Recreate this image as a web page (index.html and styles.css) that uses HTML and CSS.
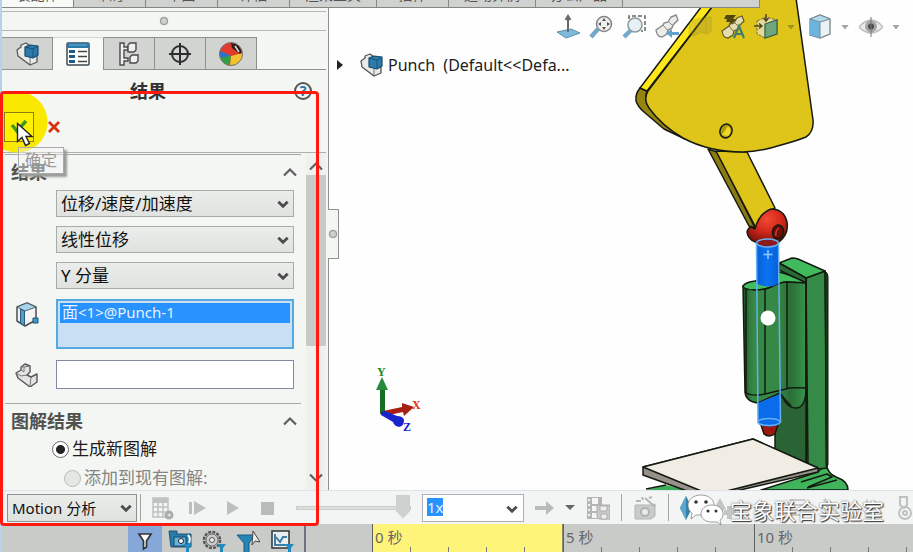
FILE: index.html
```html
<!DOCTYPE html>
<html lang="zh-CN">
<head>
<meta charset="utf-8">
<title>Punch</title>
<link rel="stylesheet" href="styles.css">
</head>
<body>
<svg class="defs" aria-hidden="true">
  <defs>
    <linearGradient id="bodyG" x1="0" x2="1"><stop offset="0" stop-color="#1d5429"/><stop offset=".15" stop-color="#358845"/><stop offset=".55" stop-color="#358845"/><stop offset=".75" stop-color="#2a6e38"/><stop offset="1" stop-color="#39944b"/></linearGradient>
    <radialGradient id="ballG" cx=".5" cy=".3" r=".7"><stop offset="0" stop-color="#f04a35"/><stop offset=".5" stop-color="#d6291b"/><stop offset="1" stop-color="#7c120c"/></radialGradient>
    <linearGradient id="pinG" x1="0" x2="1"><stop offset="0" stop-color="#0a5fd8"/><stop offset=".5" stop-color="#0a74f2"/><stop offset="1" stop-color="#0860dc"/></linearGradient>
    <symbol id="part" viewBox="0 0 24 24">
      <path d="M2 8 6 5V3l5-2 4 3v8l7 2v6l-7 3L3 14z" fill="#e9ebea" stroke="#555" stroke-width="1.3" stroke-linejoin="round"/>
      <path d="M15 22v-7" stroke="#777" stroke-width="1"/>
      <path d="m10 5 5-2 8 1v9l-5 3-8-2z" fill="#2c7bab" stroke="#164a6e" stroke-width="1.2" stroke-linejoin="round"/>
      <path d="m10 5 8 2 5-3M18 7v9" fill="none" stroke="#1b547b"/>
    </symbol>
    <symbol id="chev" viewBox="0 0 12 12"><path d="m2 4 4 4 4-4" fill="none" stroke="#4c4c4c" stroke-width="2.4"/></symbol>
    <symbol id="chevup" viewBox="0 0 14 10"><path d="m1 8.500 6-6 6 6" fill="none" stroke="#5f5f5f" stroke-width="2.200"/></symbol>
  </defs>
</svg>
<div class="app">
  <nav class="ribbon">
    <a href="#" class="rtab on">装配体</a><a href="#" class="rtab">布局</a><a href="#" class="rtab">草图</a><a href="#" class="rtab">评估</a><a href="#" class="rtab wide">渲染工具</a><a href="#" class="rtab">插件</a><a href="#" class="rtab wide">运动算例</a><a href="#" class="rtab wide">办公产品</a><a href="#" class="rtab widest">Flow Simulation</a>
  </nav>

  <main class="main">
    <aside class="panel">
      <div class="grip"><i class="dot"></i></div>
      <div class="ptabs">
        <button class="ptab" aria-label="特征树"><svg width="24" height="24"><use href="#part"/></svg></button>
        <button class="ptab on" aria-label="属性"><svg width="26" height="26" viewBox="0 0 26 26"><rect x="2" y="2" width="22" height="22" rx="1" fill="#fff" stroke="#3e4a52" stroke-width="1.500"/><path d="M2 2h22v5H2z" fill="#2b78ab"/><path d="M4 4h18" stroke="#73b0d6"/><path d="M4 9h6v3H4zM4 14h6v3H4zM4 19h6v3H4z" fill="#1f5c8a"/><path d="M13 10.500h9M13 15.500h9M13 20.500h9" stroke="#444" stroke-width="1.500"/></svg></button>
        <button class="ptab" aria-label="配置"><svg width="24" height="26" viewBox="0 0 24 26" fill="#f0f0f0" stroke="#4a4a4a" stroke-width="1.400"><path d="M3 2h4v4h4v3H7v8h4v3H7v4H3z"/><path d="m11 4 2-2h6v7l-2 2h-6zM13 16l2-2h6v6l-2 2h-6z"/></svg></button>
        <button class="ptab" aria-label="尺寸"><svg width="26" height="26" viewBox="0 0 26 26" fill="none" stroke="#2d2d2d" stroke-width="2"><circle cx="13" cy="13" r="8"/><path d="M13 2v22M2 13h22"/></svg></button>
        <button class="ptab" aria-label="外观"><svg width="26" height="26" viewBox="0 0 26 26"><circle cx="13" cy="13" r="11.500" fill="#e33a2b"/><path d="M13 15 2 10a11.500 11.500 0 0 0 10 14.500z" fill="#2fa044"/><path d="M13 15 12 24.500A11.500 11.500 0 0 0 24 16l0-4z" fill="#f2c230"/><path d="M12 14 2 10q-1 3 0 6 5 1 10-2z" fill="#2f6fd0"/><path d="m13 2q8 0 11 9l-2 2-8-6z" fill="#2a1d1d"/><path d="m17 5 4 6" stroke="#e8dede" stroke-width="1.500"/><circle cx="13" cy="13" r="11.500" fill="none" stroke="#777"/></svg></button>
      </div>
      <header class="ptitle">
        <h1>结果</h1>
        <button class="help" aria-label="帮助">?</button>
      </header>
      <div class="confirm">
        <span class="halo"></span>
        <button class="ok" aria-label="确定"><svg width="20" height="18" viewBox="0 0 20 18"><path d="m3 7 5 6 9-10" fill="none" stroke="#3f9a1e" stroke-width="3.500"/></svg></button>
        <button class="cancel" aria-label="取消"><svg width="12" height="12" viewBox="0 0 12 12"><path d="m1 1 10 10M11 1 1 11" stroke="#d9300f" stroke-width="2.800"/></svg></button>
        <span class="tip">确定</span>
        <svg class="cursor" width="18" height="26" viewBox="0 0 18 26"><path d="M1.500 1.500v18l4.500-4 3.500 8 4-2-3.500-7h6z" fill="#fff" stroke="#222" stroke-width="1.400"/></svg>
      </div>
      <div class="scroll">
        <div class="groups">
          <section class="group">
            <header class="ghead"><h2>结果</h2><button aria-label="折叠"><svg width="14" height="10"><use href="#chevup"/></svg></button></header>
            <div class="fields">
              <label class="sel"><select aria-label="类别"><option>位移/速度/加速度</option></select><svg class="arr" width="14" height="14"><use href="#chev"/></svg></label>
              <label class="sel"><select aria-label="子类别"><option>线性位移</option></select><svg class="arr" width="14" height="14"><use href="#chev"/></svg></label>
              <label class="sel"><select aria-label="分量"><option>Y 分量</option></select><svg class="arr" width="14" height="14"><use href="#chev"/></svg></label>
            </div>
            <div class="picks">
              <div class="pick">
                <svg width="24" height="26" viewBox="0 0 24 26"><path d="m2 5 10-4 9 4v13l-11 6-8-5z" fill="#f3f5f5" stroke="#4d4d4d" stroke-width="1.500" stroke-linejoin="round"/><path d="m2 5 8 4 11-4-9-4z" fill="#a9d3ea" stroke="#4b6675"/><path d="M5.500 7v14l4 2.500V9z" fill="#4f9fcb" stroke="#2b5b78"/><path d="M18 16h5v5h-5z" fill="#3b9bd0" stroke="#1c4f70"/></svg>
                <div class="list" role="listbox" aria-label="所选面"><div class="item" role="option" aria-selected="true"><span class="cj">面</span>&lt;1&gt;@Punch-1</div></div>
              </div>
              <div class="pick">
                <svg width="24" height="24" viewBox="0 0 24 24"><path d="m1 10 5-3V4l4-3 5 2v6l-3 3 4 2 6-3v8l-7 5L3 15z" fill="#e3e4e3" stroke="#555" stroke-width="1.400" stroke-linejoin="round"/><path d="m1 10 5 3 6-1M6 7l3 2V4L6 4m3 0 6-1M16 14l-1 9" fill="none" stroke="#777"/></svg>
                <input class="blank" type="text" aria-label="参考零部件">
              </div>
            </div>
          </section>
          <section class="group">
            <header class="ghead"><h2>图解结果</h2><button aria-label="折叠"><svg width="14" height="10"><use href="#chevup"/></svg></button></header>
            <div class="radios">
              <label class="radio"><input type="radio" name="plot" checked>生成新图解</label>
              <label class="radio sub"><input type="radio" name="plot" disabled>添加到现有图解:</label>
            </div>
          </section>
        </div>
        <div class="sbar"><svg width="14" height="10"><use href="#chevup"/></svg><i class="thumb"></i><svg class="down" width="14" height="10"><use href="#chevup"/></svg></div>
      </div>
    </aside>

    <section class="view">
      <svg class="scene" viewBox="329 8 584 482" preserveAspectRatio="xMaxYMin meet" stroke="#151a10" stroke-width="1.500" stroke-linejoin="round" aria-hidden="true">
        <path d="m645 490 20-5 20 5z" fill="#3cae58" stroke="none"/><path d="m645 489 20-4" fill="none"/>
        <path d="m760 490 57-18 8-8q2 10 10 13 12 4 12 13z" fill="#3fb45a"/>
        <path d="m800 482 26-8 5 3-24 10M806 488l30-8" fill="none"/>
        <path d="M774 290h32v175l-32-15z" fill="#2a6434"/>
        <path d="M805 278l19-7 2 197-8 1-11-5z" fill="#368a47"/>
        <path d="M824 271q3 2 3 6v188l-2 2z" fill="#153b1c" stroke-width="1"/>
        <path d="m778 263 13-5q3 0 6 1l27 12-19 7z" fill="#3fbb5d"/>
        <path d="m778 263 27 15v5l-27-13z" fill="#296a36"/>
        <path d="M742 286q3-4 12-5l24-9q10 2 27 11l-19-1q-6 0-16 5-6 3-16 3-12 0-12-4z" fill="#41bd5e"/>
        <path d="M742 286q0 4 12 4 10 0 16-3 10-5 16-5l19 1V391q-1 17-10 17-9 0-14-12l-2-3L757 403Q745 402 744 392z" fill="url(#bodyG)"/>
        <path d="M744 392q6 5 20 2l21-5q4-2 20-1M745 289v104M764 289v105M786 283v106M805 278v188M781 396l9 10" fill="none"/>
        <path d="m748 289 4 1v98l-4 5z" fill="#357f42" stroke="none" opacity=".6"/>
        <path d="M760 425h17l-3 9q-6 4-11 0z" fill="#9b170f"/>
        <path d="m757 403 22-9v30q-11 5-22 0z" fill="#0a6cea" stroke="none"/>
        <path d="M752 439 642 467v8l55 20 29-2 91-21v-4z" fill="#96918a"/>
        <path d="m752 439-110 28 68 28 107-27z" fill="#f1ece4"/>

        <path d="m707 149 9 3 38 76-6-2z" fill="#8b7b12"/>
        <path d="m715 151 31 1 28 56q-14 8-19 20z" fill="#dfc519"/>
        <path d="M746 232q1-4 4-5l4 2q4-16 16-20 13 0 16 13 2 12-8 20l-10 1q-20 2-22-11z" fill="url(#ballG)"/>
        <ellipse cx="777" cy="232" rx="5.500" ry="7" fill="#6b0d08" transform="rotate(15 777 232)"/><path d="M775 236q-1-5 3-8" stroke="#d53a2a" fill="none"/>
        <path d="M756 243h21v41q-9 5-21 0z" fill="url(#pinG)" stroke="none"/>
        <ellipse cx="766.500" cy="243" rx="10" ry="4" fill="#8a1a20" stroke="none"/>
        <g fill="none" stroke="#65b0f2"><ellipse cx="766.500" cy="243" rx="11" ry="4"/><path d="M755.500 243 757 423M777.500 243l2 180"/><ellipse cx="768" cy="422" rx="11" ry="3.500"/><path d="M767 250v9M762.500 254.500h9" stroke="#8fcaff"/></g>
        <circle cx="767" cy="318" r="7.500" fill="#fff" stroke="none"/>

        <path d="M639 88q-5 6-4 13 2 6 8 11l20 17 21 10-36-33q-5-7-2-15z" fill="#958410"/>
        <path d="M707-2 639 88l7 3L718-2z" fill="#ffe71c"/>
        <path d="M718-2 647 91q-5 9 1 17 13 18 34 30 26 14 60 14 16 0 38-7 15-4 25-8 8-5 7-17L795-2z" fill="#dfc519"/>
        <ellipse cx="725" cy="131" rx="6" ry="7" fill="#b29c10" transform="rotate(20 725 131)"/><path d="m721 135 6-9q5 5 0 10z" fill="#f0d924" stroke="none"/>

        <g stroke="none">
          <path d="M379 386h5v28h-5z" fill="#166e25"/><path d="m381 377 6 13h-12z" fill="#26883a"/>
          <path d="m382 411 19-4v-4l12 4-10 9-1-4-19 4z" fill="#a81f13"/><path d="m380 412 4-1 12 5q6 0 7 4 0 6-5 7-5-1-6-5l-12-7z" fill="#1a24cc"/>
        </g>
        <g class="axes" stroke="none"><text x="376" y="376" fill="#168a2a">Y</text><text x="411" y="409" fill="#e03020">X</text><text x="402" y="431" fill="#1a24cc">Z</text></g>
      </svg>
      <div class="handle"><i class="dot"></i></div>
      <div class="tree">
        <svg width="6" height="10" viewBox="0 0 6 10"><path d="m0 0 6 5-6 5z" fill="#222"/></svg>
        <svg width="24" height="24"><use href="#part"/></svg>
        <span>Punch  (Default&lt;&lt;Defa...</span>
      </div>
      <div class="hud">
        <button aria-label="正视于"><svg viewBox="0 0 24 26"><path d="m1 18 14-3 9 4-14 5z" fill="#7fbadb" stroke="#5b91b0"/><path d="M12 18V3M9.500 6 12 2l2.500 4" stroke="#6a6a6a" stroke-width="2" fill="none"/></svg></button>
        <button aria-label="整屏显示全图"><svg viewBox="0 0 24 26"><path d="m2 23 7-8" stroke="#74a9c8" stroke-width="4.500"/><circle cx="15" cy="10" r="7.500" fill="#eef0f0" stroke="#888" stroke-width="1.600"/><path d="m15 4 2 3h-4zM15 16l2-3h-4zM9 10l3-2v4zM21 10l-3-2v4z" fill="#555"/></svg></button>
        <button aria-label="局部放大"><svg viewBox="0 0 24 26"><path d="M7 5V2h16v15h-4" fill="none" stroke="#666" stroke-width="1.500" stroke-dasharray="4 2"/><path d="m2 23 7-7" stroke="#74a9c8" stroke-width="4.500"/><circle cx="13" cy="11" r="7" fill="#e7f0f5" stroke="#8f9ba0" stroke-width="1.600"/></svg></button>
        <button aria-label="上一视图"><svg viewBox="0 0 24 26"><path d="m1 16 7-5 1-2 4-1 3-5 5-2 2 5-5 5-1 3-4 2-1 4-5 3q-5 0-6-7z" fill="#ececea" stroke="#898989" stroke-width="1.400"/><path d="m13 7 5 5M8 11l5 6" stroke="#8d8d8d"/><path d="m11 19 6-4v3h7v3h-7v3z" fill="#5fa3cc"/></svg></button>
        <button aria-label="剖面视图"><svg viewBox="0 0 24 26" opacity=".3"><path d="m2 7 12-3 9-1v14l-4 3-6-2-8 4-4-2z" fill="#a59530" stroke="#796d18"/><path d="m14 4 4 3v12M2 7l5 2v12" stroke="#796d18" fill="none"/></svg></button>
        <button aria-label="视图设定"><svg viewBox="0 0 24 26"><path d="M5 1h10l-3 4h4l-9 8 2-5H5l1-3H3z" fill="#51470f"/><path d="m1 17 7-5 1-2 4-1 3-5 5-2 2 5-5 5-1 3-4 2-1 4-5 3q-5 0-6-7z" fill="#e4dcae" stroke="#665e30" stroke-width="1.300"/><path d="m13 8 5 5M8 12l5 6" stroke="#777044"/><path d="m13 24 5-12 5 12M15 20h7" stroke="#447e6a" stroke-width="2.200" fill="none"/></svg></button>
        <button aria-label="视图定向"><svg viewBox="0 0 24 26"><path d="m3 7 9-4 11 3v14l-12 4-8-4z" fill="#e4d99b" stroke="#797034" stroke-dasharray="3 1"/><path d="m11 10 12-4v14l-12 4z" fill="#6fa77d" stroke="#37624c" stroke-width="1.300"/><path d="M12 0v7M9.500 4 12 7l2.500-3M0 12h8M5 9.500 8 12l-3 2.500" stroke="#4f471c" stroke-width="1.500" fill="none"/></svg></button>
        <i class="tri dim"></i>
        <button aria-label="显示样式"><svg viewBox="0 0 24 26"><path d="m2 5 10-4 10 4v15l-10 4-10-3z" fill="#eaf2f5" stroke="#778289" stroke-width="1.300"/><path d="m2 5 10 3v16L2 21z" fill="#6cb4dc"/><path d="m2 5 10 3 10-3-10-4z" fill="#b3daec" stroke="#728896"/><path d="M12 8v16" stroke="#728896"/></svg></button>
        <i class="tri"></i>
        <button aria-label="隐藏/显示项目"><svg viewBox="0 0 24 26"><path d="M0 13q12-14 24 0-12 12-24 0z" fill="#ecebea" stroke="#bbb" stroke-width="1.300"/><circle cx="12" cy="12.500" r="6" fill="#a5a5a5"/><circle cx="12" cy="12.500" r="3" fill="#4c4c4c"/><path d="M12 3v20" stroke="#777"/></svg></button>
        <i class="tri"></i>
      </div>
    </section>
  </main>

  <div class="motion">
    <label class="sel study"><select aria-label="算例类型"><option>Motion 分析</option></select><svg class="arr" width="14" height="14"><use href="#chev"/></svg></label>
    <i class="vsep first"></i>
    <div class="tools">
      <button aria-label="计算"><svg viewBox="0 0 24 24" fill="none" stroke="#bfc1c0" stroke-width="1.500"><path d="M2 2h15v19H2zM2 6h15M2 11h15M2 16h15M7 6v15M12 6v15"/><path d="M3 3h13v3H3z" fill="#bfc1c0"/><circle cx="18" cy="19" r="3" stroke-width="3" stroke="#aaacab"/></svg></button>
      <button aria-label="从头播放"><svg viewBox="0 0 24 24" fill="#bcbfbd"><path d="M3 6h3v12H3zM8 5l12 7-12 7z"/></svg></button>
      <button aria-label="播放"><svg viewBox="0 0 24 24"><path d="m6 5 12 7-12 7z" fill="#bcbfbd"/></svg></button>
      <button aria-label="停止"><svg viewBox="0 0 24 24"><path d="M5 6h13v13H5z" fill="#b9bbba"/></svg></button>
      <input class="slider" type="range" value="100" aria-label="时间">
      <label class="combo"><input type="text" value="1x" aria-label="播放速度"><svg class="arr" width="14" height="14"><use href="#chev"/></svg></label>
      <button class="narrow" aria-label="播放模式"><svg viewBox="0 0 20 24"><path d="M0 10h11V5l8 7-8 7v-5H0z" fill="#b9bbba"/></svg></button>
      <i class="tri dark"></i>
      <button aria-label="保存动画"><svg viewBox="0 0 24 24"><path d="M1 1h15v22H1z" fill="#b4b6b5"/><path d="M6 2h6v6H6zM6 10h6v5H6zM6 17h6v5H6zM2 3h2v2H2zM2 8h2v2H2zM2 13h2v2H2zM2 18h2v2H2z" fill="#f4f5f4"/><path d="M11 9h13v14H13l-2-2z" fill="#c8cac9" stroke="#aaa"/><path d="M14 10h7v5h-7zM15 18h6v5h-6z" fill="#eee" stroke="#aaa"/></svg></button>
      <i class="vsep"></i>
      <button aria-label="动画向导"><svg viewBox="0 0 24 24"><path d="M2 9h16l4-1v12l-4 3H2z" fill="#c9cbca" stroke="#b3b5b4"/><circle cx="12" cy="16" r="4" fill="#e9eae9" stroke="#b0b2b1" stroke-width="2"/><path d="m12 2 10 9M3 5h5M16 2l3-1M9 1l1 3" stroke="#b5b7b6" stroke-width="2"/></svg></button>
      <i class="vsep"></i>
      <button aria-label="自动键码"><svg viewBox="0 0 24 24"><path d="m6 0 6 12-6 12-6-12z" fill="#3580a8"/><path d="M6 0v24l-6-12z" fill="#5ba8cf"/></svg></button>
      <button aria-label="添加键码"><svg viewBox="0 0 24 24"><path d="m5 2 6 11-6 3-6-3zM12 10h5v4h4v5h-4v4h-5v-4H9v-5h3z" fill="#c3c5c4"/></svg></button>
      <button aria-label="马达"><svg viewBox="0 0 24 24" fill="none" stroke="#d3d5d4" stroke-width="3"><circle cx="12" cy="13" r="6"/></svg></button>
      <button aria-label="弹簧"><svg viewBox="0 0 24 24" stroke="#c9cbca" stroke-width="2" fill="none"><path d="M4 4h16M4 9h16M4 14h16M4 19h16"/></svg></button>
      <button aria-label="接触"><svg viewBox="0 0 24 24" stroke="#c9cbca" stroke-width="3" fill="none"><path d="m4 3 14 15"/></svg></button>
      <button aria-label="引力"><svg viewBox="0 0 24 24" stroke="#d3d5d4" stroke-width="2" fill="none"><path d="M12 3v16M8 14l4 5 4-5"/></svg></button>
      <button aria-label="结果和图解"><svg viewBox="0 0 24 24" stroke="#bfc1c0" stroke-width="2" fill="none"><path d="M10 1h7v8l-3 3-4-3z"/><circle cx="15" cy="17" r="6"/><circle cx="15" cy="17" r="2"/></svg></button>
    </div>
    <div class="mark">
      <svg width="38" height="32" viewBox="0 0 38 32" stroke="#777" stroke-width=".7"><path d="M14 1c8 0 13 5 13 10s-5 10-13 10l-5 0-5 4 1-6c-3-2-4-5-4-8C1 6 6 1 14 1z" fill="#fff"/><path d="M25 11c7 0 11 4 11 9 0 3-1 5-3 6l1 5-4-3h-5c-7 0-11-4-11-8 0-5 4-9 11-9z" fill="#fff"/><g fill="#333" stroke="none"><circle cx="9" cy="8" r="1.800"/><circle cx="19" cy="8" r="1.800"/><circle cx="21" cy="17" r="1.500"/><circle cx="29" cy="17" r="1.500"/></g></svg>
      <span>宝象联合实验室</span>
    </div>
  </div>

  <div class="bottom">
    <div class="filters">
      <button class="on" aria-label="无过滤"><svg viewBox="0 0 24 24"><path d="M6 5h12l-4.500 7v6l-3 2v-8z" fill="#fff" stroke="#333" stroke-width="1.700"/></svg></button>
      <button aria-label="过滤动画"><svg viewBox="0 0 24 24"><path d="M1 2h8v3h14v13H3z" fill="#277cab" stroke="#225070"/><path d="M6 8h12v9H6z" fill="#65b4de" stroke="#174a68"/><circle cx="13" cy="12" r="2.500" fill="#fff" stroke="#222"/><path d="M20 6q3 3 1 8" fill="none" stroke="#fff" stroke-width="2"/><path d="M15 15h9l-3 4v5h-3v-5z" fill="#2089bd"/></svg></button>
      <button aria-label="过滤驱动"><svg viewBox="0 0 24 24"><circle cx="10" cy="11" r="8" fill="#ccc" stroke="#555" stroke-width="2.500" stroke-dasharray="3 1.200"/><circle cx="10" cy="11" r="6" fill="#ccc" stroke="#666"/><circle cx="10" cy="11" r="2.500" fill="#eee" stroke="#555"/><path d="M15 15h9l-3 4v5h-3v-5z" fill="#2089bd"/></svg></button>
      <button aria-label="过滤选定"><svg viewBox="0 0 24 24"><path d="M1 6h18l-6 8v10H8V14z" fill="#2585b7" stroke="#1a5b80"/><path d="m17 2 7 11-5-1-3 4z" fill="#eee" stroke="#444"/></svg></button>
      <button aria-label="过滤结果"><svg viewBox="0 0 24 24"><path d="M2 2h17v17H2z" fill="#e8eef2" stroke="#333" stroke-width="1.500"/><path d="M5 5v11h11M6 8l4 5 3-5h4" fill="none" stroke="#3c7ea6" stroke-width="2"/><path d="M15 15h9l-3 4v5h-3v-5z" fill="#2089bd"/></svg></button>
    </div>
    <div class="lead"></div>
    <div class="time active"><span>0 秒</span><i></i><i></i><i></i><i></i></div>
    <div class="time"><span>5 秒</span><i></i><i></i><i></i><i></i></div>
    <div class="time"><span>10 秒</span><i></i><i></i><i></i><i></i></div>
  </div>
  <div class="frame"></div>
</div>
</body>
</html>
```
FILE: styles.css
```css
* { box-sizing: border-box; }
body {
  margin: 0;
  font-family: "Noto Sans", "Noto Sans CJK SC", sans-serif;
  font-size: 17px;
  color: #1c1c1c;
  background: #fdfefd;
}
button { border: 0; padding: 0; background: none; font: inherit; display: grid; place-items: center; }
.defs { position: absolute; width: 0; height: 0; }
.app {
  position: relative;
  display: grid;
  grid-template-rows: 8px minmax(0, 1fr) 34px 28px;
  height: 100vh;
  overflow: hidden;
}

/* command tabs */
.ribbon { display: flex; position: relative; z-index: 2; padding-left: 2px; overflow: hidden; justify-self: start; background: #b9d3e6; }
.rtab {
  width: 72px; height: 8px; overflow: hidden;
  display: flex; align-items: flex-end; justify-content: center;
  line-height: 18px; padding-bottom: 3px;
  font-size: 14px; color: #555; text-decoration: none; white-space: nowrap;
  background: #d0d2d0; border-right: 1px solid #858785; border-bottom: 1px solid #858785;
}
.rtab.on { background: #f8faf8; }
.rtab.wide { width: 87px; }
.rtab.widest { width: 137px; }

.main { display: flex; min-height: 0; }

/* property panel */
.panel {
  flex: 0 0 329px;
  display: flex; flex-direction: column;
  padding: 3px 2px 0 0;
  background: #f4f6f4;
  border-left: 2px solid #b9d3e6; border-right: 1px solid #8f918f;
}
.grip { height: 20px; display: grid; place-items: center; border: solid #b7b9b7; border-width: 1px 0; }
.dot { width: 8px; height: 8px; border-radius: 50%; background: #cfd1cf; border: 1px solid #949694; box-shadow: 0 0 1px #999; }
.ptabs { display: flex; margin-top: 6px; height: 33px; box-shadow: inset 0 -1px #8f918f; }
.ptab { width: 51px; background: #d2d4d2; border: 1px solid #8f918f; border-left-width: 0; }
.ptab.on { background: #f8faf8; border-bottom: 0; border-top-color: #d5d7d5; }
.ptitle { display: flex; align-items: center; height: 42px; padding-right: 14px; }
h1, h2 { margin: 0; font-size: 18px; line-height: 24px; font-weight: bold; color: #333; }
h1 { flex: 1; text-align: center; }
h2 { color: #505250; }
.help { width: 18px; height: 18px; border: 2px solid #555; border-radius: 50%; color: #2478ac; font-size: 14px; font-weight: bold; line-height: 14px; }
.confirm { position: relative; display: flex; align-items: flex-start; gap: 14px; height: 41px; padding-left: 2px; border-bottom: 1px solid #aeb0ae; z-index: 1; }
.halo { position: absolute; left: 0; top: -21px; width: 46px; height: 62px; background: radial-gradient(circle 31px at 15px 31px, #f9e800 30px, transparent 31px); }
.ok { position: relative; width: 30px; height: 30px; border: 1px solid #8b7f16; background: #fff000; }
.cancel { height: 30px; }
.tip { position: absolute; left: 16px; top: 35px; padding: 0 6px; border: 1px solid #aaa; background: #f4f6f466; box-shadow: 3px 3px 2px #9a9c9a; color: #999; font-size: 16px; line-height: 25px; }
.cursor { position: absolute; left: 14px; top: 10px; }

.scroll { flex: 1; display: flex; min-height: 0; overflow: hidden; }
.groups { flex: 1; padding: 1px 5px 0 3px; }
.group { border-top: 1px solid #a5a7a5; }
.ghead { display: flex; justify-content: space-between; align-items: center; height: 33px; padding: 0 4px 0 6px; }
.fields { display: grid; gap: 9px; padding: 2px 7px 0 51px; }
.sel { position: relative; display: block; }
.sel select {
  appearance: none; display: block; width: 100%; height: 27px; padding: 0 4px;
  border: 1px solid #a9aba9; border-radius: 0;
  background: linear-gradient(#ebedeb, #e0e2e0);
  font: inherit; line-height: 24px; color: #111;
}
.arr { position: absolute; right: 4px; top: 7px; pointer-events: none; }
.picks { display: grid; gap: 11px; padding: 10px 7px 14px 10px; }
.pick { display: grid; grid-template-columns: 24px 1fr; column-gap: 17px; align-items: center; }
.pick > svg { align-self: start; margin-top: 3px; }
.list { height: 50px; padding: 2px; border: 2px solid #55a9e2; background: #c8dff4; outline: 0; }
.item { height: 20px; line-height: 18px; padding-left: 2px; background: #2892ff; color: #e6f2ff; font-size: 15px; white-space: nowrap; }
.cj { font-size: 16px; }
.blank { width: 100%; height: 29px; border: 1px solid #8389a3; background: #fff; }
.radios { display: grid; gap: 5px; padding-left: 47px; }
.radio { display: flex; align-items: center; gap: 3px; height: 24px; line-height: 22px; }
.radio.sub { padding-left: 12px; color: #838583; }
.radio input { appearance: none; flex: none; margin: 0; width: 17px; height: 17px; border: 1px solid #666; border-radius: 50%; background: #fff; }
.radio input:checked { background: radial-gradient(circle, #222 4px, #fff 5px); }
.radio input:disabled { border-color: #b9bbb9; background: #e5e7e5; }
.sbar { width: 20px; display: flex; flex-direction: column; align-items: center; background: #eff1ef; padding: 8px 0 7px; }
.thumb { width: 100%; height: 171px; margin: 4px 0 auto; background: #c8cac8; }
.down { transform: rotate(180deg); }

/* graphics area */
.view { flex: 1; position: relative; min-width: 0; }
.scene { display: block; width: 100%; height: 100%; overflow: visible; }
.axes { font: bold 12px "Liberation Serif", serif; }
.handle { position: absolute; left: -1px; top: 201px; width: 11px; height: 50px; display: grid; place-items: center; background: #f4f6f4; border: 1px solid #8f918f; border-left: 0; }
.tree { position: absolute; left: 8px; top: 44px; display: flex; align-items: center; font-size: 16px; line-height: 26px; white-space: pre; }
.tree svg + svg { margin: 0 5px 0 16px; }
.hud { position: absolute; right: 9px; top: 6px; display: flex; align-items: center; }
.hud button { width: 33px; height: 26px; }
.hud button svg { width: 24px; height: 26px; }
.tri { flex: none; width: 8px; height: 5px; margin: 0 5px; background: #a5a5a5; clip-path: polygon(0 0, 100% 0, 50% 100%); }
.tri.dim { margin-right: 8px; background: #a08f22; }
.tri.dark { width: 10px; margin: 0; background: #666; }

/* motion study toolbar */
.motion { position: relative; z-index: 3; display: flex; align-items: center; padding-left: 7px; background: #f3f5f4; border-top: 1px solid #dfe2ea; }
.study { width: 130px; font-size: 15px; }
.study select { height: 28px; border-color: #909290; }
.vsep { flex: none; width: 1px; height: 27px; background: #a3a5a3; }
.vsep.first { margin: 0 10px 0 3px; }
.tools { flex: 1; min-width: 0; display: flex; align-items: center; gap: 11px; overflow: hidden; }
.tools button { flex: none; width: 24px; }
.tools button.narrow { width: 20px; margin-right: -1px; }
.tools button svg { width: 100%; height: 24px; }
.slider { appearance: none; flex: none; width: 120px; height: 26px; margin: 0; padding-left: 5px; background: none; }
.slider::-webkit-slider-runnable-track { height: 4px; background: #dcdedc; border: 1px solid #cbcdcb; }
.slider::-webkit-slider-thumb { appearance: none; width: 14px; height: 24px; margin-top: -12px; background: #cfd1cf; clip-path: polygon(0 0, 100% 0, 100% 70%, 50% 100%, 0 70%); }
.combo { position: relative; flex: none; width: 102px; height: 28px; padding: 3px 4px; display: flex; align-items: flex-start; background: #fff; border: 1px solid #b0b1b8; }
.combo input { width: 16px; height: 18px; padding: 0; border: 0; background: #2892ff; color: #e6f2ff; font: inherit; font-size: 15px; }
.mark { position: absolute; right: 30px; bottom: -2px; display: flex; align-items: center; gap: 5px; color: #fff; font-size: 22px; line-height: 28px; text-shadow: 1px 1px 1px #333, 0 0 2px #555; white-space: nowrap; }

/* filters and time line */
.bottom { display: flex; background: #c9cbc9; border-left: 2px solid #b9d3e6; overflow: hidden; }
.filters { flex: none; width: 304px; display: flex; gap: 9px; padding-left: 126px; border-right: 2px solid #6d727c; }
.filters button { width: 25px; height: 33px; }
.filters button.on { width: 34px; margin-right: -4px; background: #86a8d8; }
.filters svg { width: 24px; height: 24px; }
.lead { flex: none; width: 66px; }
.time {
  position: relative; flex: none; width: 191px; height: 28px;
  display: grid; grid-template-columns: repeat(4, 38px); align-items: end;
  border-left: 1px solid #5f615f;
}
.time.active { background: #fff47a; border-right: 1px solid #8b8b6b; }
.time span { position: absolute; left: 2px; top: 3px; font-size: 15px; line-height: 20px; color: #666; }
.time i { height: 5px; border-right: 1px solid #777; }

/* callout */
.frame { position: absolute; z-index: 5; left: 0; top: 91px; width: 319px; height: 435px; border: 3px solid #ff1a10; border-radius: 4px; pointer-events: none; }
```
